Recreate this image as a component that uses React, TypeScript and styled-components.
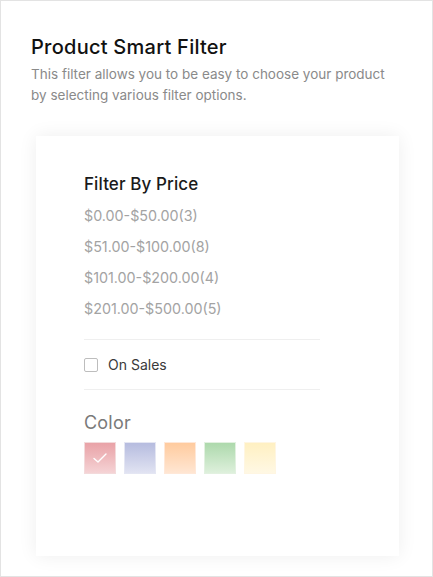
import styled, { createGlobalStyle } from "styled-components";

const GlobalStyle = createGlobalStyle`
  html, body {
    margin: 0;
    padding: 0;
    background: #ffffff;
  }
  * {
    box-sizing: border-box;
  }
`;

const Frame = styled.div`
  width: 433px;
  height: 577px;
  border: 1px solid #e3e3e3;
  padding: 33px 0 0 30px;
  font-family: Inter, "Noto Sans", sans-serif;
  background: #fff;
  overflow: hidden;
`;

const Title = styled.h1`
  margin: 0;
  font-size: 20px;
  line-height: 27px;
  font-weight: 500;
  color: #111;
  letter-spacing: 0.25px;
`;

const Description = styled.p`
  margin: 3px 0 0;
  width: 370px;
  font-size: 13.5px;
  line-height: 21px;
  color: #8a8a8a;
`;

const Card = styled.div`
  margin: 30px 0 0 5px;
  width: 363px;
  height: 420px;
  padding: 36px 0 0 48px;
  background: #fff;
  box-shadow: 0 0 18px rgba(0, 0, 0, 0.07);
`;

const Content = styled.div`
  width: 236px;
`;

const SectionTitle = styled.h2`
  margin: 0;
  font-size: 17px;
  line-height: 24px;
  font-weight: 500;
  color: #1a1a1a;
  letter-spacing: 0.1px;
`;

const PriceList = styled.ul`
  list-style: none;
  margin: 3.5px 0 0;
  padding: 0;
`;

const PriceItem = styled.li`
  font-size: 14.3px;
  line-height: 31px;
  color: #a3a3a3;
`;

const Divider = styled.hr<{ $gap?: number }>`
  margin: ${(p) => p.$gap ?? 0}px 0 0;
  border: none;
  border-top: 1px solid #efefef;
`;

const CheckRow = styled.label`
  display: flex;
  align-items: center;
  gap: 10px;
  height: 49px;
  font-size: 14px;
  color: #3a3a3a;
`;

const CheckBox = styled.span`
  width: 14px;
  height: 14px;
  border: 1.5px solid #bdbdbd;
  border-radius: 2px;
`;

const ColorTitle = styled.h3`
  margin: 21px 0 0;
  font-size: 18px;
  line-height: 24px;
  font-weight: 400;
  color: #7a7a7a;
  letter-spacing: 0.2px;
`;

const Swatches = styled.div`
  display: flex;
  gap: 8px;
  margin-top: 6.5px;
`;

const Swatch = styled.div<{ $top: string; $bottom: string; $edge: string }>`
  width: 32px;
  height: 32px;
  display: flex;
  align-items: center;
  justify-content: center;
  border: 1px solid ${(p) => p.$edge};
  background: linear-gradient(${(p) => p.$top}, ${(p) => p.$bottom});
`;

const prices = [
  "$0.00-$50.00(3)",
  "$51.00-$100.00(8)",
  "$101.00-$200.00(4)",
  "$201.00-$500.00(5)",
];

const colors = [
  { top: "#e9a2a7", bottom: "#f5d3d5", edge: "#f3dadb", checked: true },
  { top: "#b6bcdf", bottom: "#e1e3f2", edge: "#e4e6f3", checked: false },
  { top: "#ffcb9e", bottom: "#ffe6d3", edge: "#ffe8d8", checked: false },
  { top: "#add9ac", bottom: "#def0dc", edge: "#e2f1e0", checked: false },
  { top: "#fff0c2", bottom: "#fff8e4", edge: "#fff6e2", checked: false },
];

function App() {
  return (
    <>
      <GlobalStyle />
      <Frame>
        <Title>Product Smart Filter</Title>
        <Description>
          This filter allows you to be easy to choose your product by selecting
          various filter options.
        </Description>
        <Card>
          <Content>
            <SectionTitle>Filter By Price</SectionTitle>
            <PriceList>
              {prices.map((p) => (
                <PriceItem key={p}>{p}</PriceItem>
              ))}
            </PriceList>
            <Divider $gap={15.5} />
            <CheckRow>
              <CheckBox />
              On Sales
            </CheckRow>
            <Divider />
            <ColorTitle>Color</ColorTitle>
            <Swatches>
              {colors.map((c) => (
                <Swatch key={c.top} $top={c.top} $bottom={c.bottom} $edge={c.edge}>
                  {c.checked && (
                    <svg width="16" height="12" viewBox="0 0 16 12">
                      <path
                        d="M2 6.5 L6 10 L14 2"
                        fill="none"
                        stroke="#fff"
                        strokeWidth="1.4"
                        strokeLinecap="round"
                        strokeLinejoin="round"
                      />
                    </svg>
                  )}
                </Swatch>
              ))}
            </Swatches>
          </Content>
        </Card>
      </Frame>
    </>
  );
}

export default App;
